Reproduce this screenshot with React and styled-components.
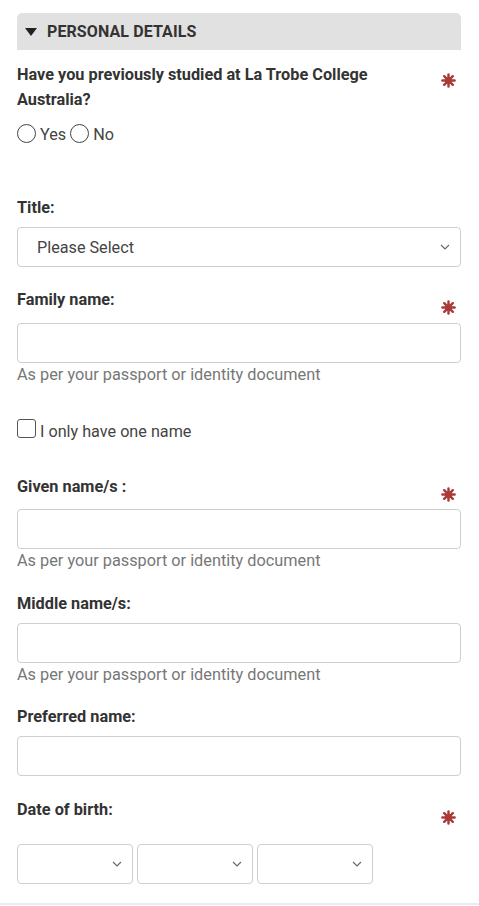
import React from "react";
import styled, { createGlobalStyle } from "styled-components";

const Global = createGlobalStyle`
  body {
    margin: 0;
    background: #fff;
    font-family: Roboto, "Liberation Sans", Arial, sans-serif;
    color: #333;
  }
`;

const Page = styled.div`
  padding: 13px 18px 0 17px;
  border-bottom: 2px solid #ebebeb;
  padding-bottom: 19px;
`;

const Header = styled.div`
  height: 37px;
  background: #e1e1e1;
  border-radius: 5px 5px 0 0;
  display: flex;
  align-items: center;
  padding-left: 8px;
  gap: 10px;
  font-size: 16px;
  font-weight: 700;
  letter-spacing: 0.1px;
  color: #333;
`;

const Triangle = styled.span`
  width: 0;
  height: 0;
  border-left: 6px solid transparent;
  border-right: 6px solid transparent;
  border-top: 8px solid #222;
  margin-top: 1px;
`;

const LabelRow = styled.div`
  display: flex;
  justify-content: space-between;
  align-items: flex-start;
  margin-top: ${p => p.$mt}px;
`;

const Label = styled.div`
  font-size: 16.3px;
  font-weight: 700;
  line-height: ${p => p.$lh || 24}px;
  color: #333;
  max-width: 400px;
`;

const Star = styled.svg`
  width: 15px;
  height: 15px;
  margin-top: ${p => p.$mt || 12}px;
  margin-right: 5px;
  margin-bottom: -20px;
  flex-shrink: 0;
`;

const Asterisk = ({ mt }) => (
  <Star $mt={mt} viewBox="0 0 16 16">
    <g stroke="#a83a3a" strokeWidth="2.6" strokeLinecap="round">
      <line x1="8" y1="1.5" x2="8" y2="14.5" />
      <line x1="1.5" y1="8" x2="14.5" y2="8" />
      <line x1="3.4" y1="3.4" x2="12.6" y2="12.6" />
      <line x1="12.6" y1="3.4" x2="3.4" y2="12.6" />
    </g>
    <circle cx="8" cy="8" r="3.6" fill="#a83a3a" />
  </Star>
);

const ChoiceRow = styled.div`
  display: flex;
  align-items: center;
  height: 24px;
  margin-top: ${p => p.$mt}px;
  font-size: 16.2px;
  color: #444;
`;

const Radio = styled.span`
  width: 17px;
  height: 17px;
  border: 1px solid #444;
  border-radius: 50%;
  margin-right: 4px;
  flex-shrink: 0;
`;

const ChoiceText = styled.span`
  margin-right: 4px;
  margin-top: 3px;
`;

const Check = styled.span`
  width: 17px;
  height: 17px;
  border: 1px solid #555;
  border-radius: 3px;
  margin-right: 4px;
  margin-top: -3px;
  flex-shrink: 0;
`;

const Box = styled.div`
  box-sizing: border-box;
  height: 40px;
  width: ${p => p.$w || "100%"};
  border: 1px solid #cfcfcf;
  border-radius: 4px;
  background: #fff;
  margin-top: ${p => p.$mt}px;
  display: flex;
  align-items: center;
  justify-content: space-between;
  padding: 0 10px 0 19px;
  font-size: 16.2px;
  color: #444;
`;

const DateRow = styled.div`
  display: flex;
  gap: 4px;
  margin-top: ${p => p.$mt}px;
`;

const Help = styled.div`
  font-size: 16.3px;
  line-height: 24px;
  color: #777;
`;

const Chevron = () => (
  <svg width="10" height="6" viewBox="0 0 10 6">
    <polyline points="1,1 5,5 9,1" fill="none" stroke="#666" strokeWidth="1.1" />
  </svg>
);

const Select = ({ text, mt, w }) => (
  <Box $mt={mt} $w={w}>
    <span>{text}</span>
    <Chevron />
  </Box>
);

export default function App() {
  return (
    <>
      <Global />
      <Page>
        <Header>
          <Triangle />
          PERSONAL DETAILS
        </Header>

        <LabelRow $mt={12}>
          <Label $lh={25}>Have you previously studied at La Trobe College Australia?</Label>
          <Asterisk mt={11} />
        </LabelRow>
        <ChoiceRow $mt={9}>
          <Radio />
          <ChoiceText>Yes</ChoiceText>
          <Radio />
          <ChoiceText>No</ChoiceText>
        </ChoiceRow>

        <LabelRow $mt={51}>
          <Label>Title:</Label>
        </LabelRow>
        <Select text="Please Select" mt={7} />

        <LabelRow $mt={21}>
          <Label>Family name:</Label>
          <Asterisk />
        </LabelRow>
        <Box $mt={11} />
        <Help>As per your passport or identity document</Help>

        <ChoiceRow $mt={31}>
          <Check />
          <ChoiceText>I only have one name</ChoiceText>
        </ChoiceRow>

        <LabelRow $mt={33}>
          <Label>Given name/s :</Label>
          <Asterisk />
        </LabelRow>
        <Box $mt={10} />
        <Help>As per your passport or identity document</Help>

        <LabelRow $mt={19}>
          <Label>Middle name/s:</Label>
        </LabelRow>
        <Box $mt={7} />
        <Help>As per your passport or identity document</Help>

        <LabelRow $mt={18}>
          <Label>Preferred name:</Label>
        </LabelRow>
        <Box $mt={7} />

        <LabelRow $mt={22}>
          <Label>Date of birth:</Label>
          <Asterisk />
        </LabelRow>
        <DateRow $mt={22}>
          <Select text="" w="116px" />
          <Select text="" w="116px" />
          <Select text="" w="116px" />
        </DateRow>
      </Page>
    </>
  );
}
